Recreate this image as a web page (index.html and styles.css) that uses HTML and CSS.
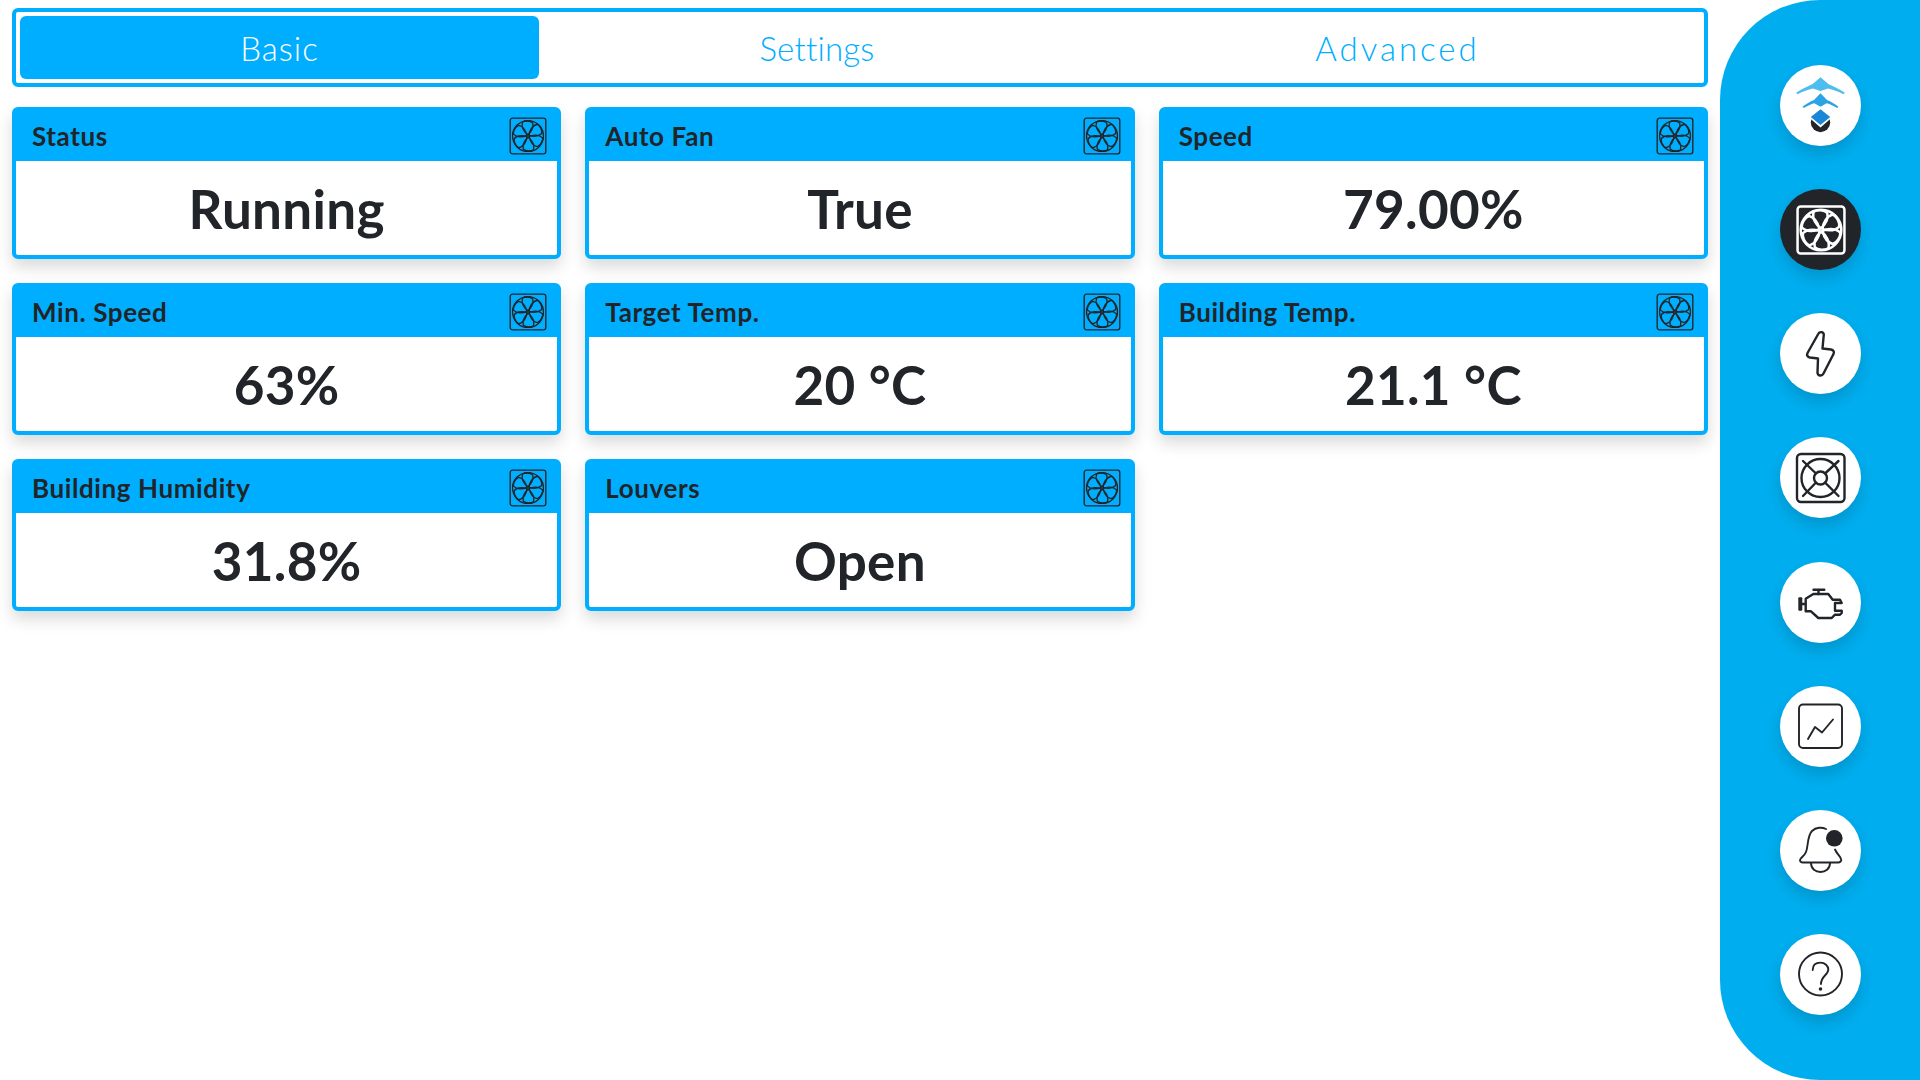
FILE: index.html
```html
<!DOCTYPE html>
<html lang="en">
<head>
<meta charset="utf-8">
<title>Fan Dashboard</title>
<link rel="stylesheet" href="styles.css">
</head>
<body>
<svg class="defs" aria-hidden="true">
  <defs>
    <symbol id="fan" viewBox="0 0 48 48">
      <rect x="1.5" y="1.5" width="45" height="45" rx="3"/>
      <circle cx="24" cy="24" r="19.500"/>
      <circle cx="24" cy="24" r="1.600"/>
      <g id="blade">
        <path d="M24 22.400C19.500 19.500 15 13 17 6.500C20.500 4.500 27 4.500 30 7.500C31.500 13 27.500 19 24 22.400"/>
      </g>
      <use href="#blade" transform="rotate(60 24 24)"/>
      <use href="#blade" transform="rotate(120 24 24)"/>
      <use href="#blade" transform="rotate(180 24 24)"/>
      <use href="#blade" transform="rotate(240 24 24)"/>
      <use href="#blade" transform="rotate(300 24 24)"/>
    </symbol>
  </defs>
</svg>
<div class="app">
  <main class="content">
    <nav class="tabs">
      <a class="tab tab-active">Basic</a>
      <a class="tab tab-settings">Settings</a>
      <a class="tab tab-advanced">Advanced</a>
    </nav>
    <section class="cards">
      <article class="card"><header class="card-head"><h2>Status</h2><svg class="fan-small"><use href="#fan"/></svg></header><div class="card-value">Running</div></article>
      <article class="card"><header class="card-head"><h2>Auto Fan</h2><svg class="fan-small"><use href="#fan"/></svg></header><div class="card-value">True</div></article>
      <article class="card"><header class="card-head"><h2>Speed</h2><svg class="fan-small"><use href="#fan"/></svg></header><div class="card-value">79.00%</div></article>
      <article class="card"><header class="card-head"><h2>Min. Speed</h2><svg class="fan-small"><use href="#fan"/></svg></header><div class="card-value">63%</div></article>
      <article class="card"><header class="card-head"><h2>Target Temp.</h2><svg class="fan-small"><use href="#fan"/></svg></header><div class="card-value">20 °C</div></article>
      <article class="card"><header class="card-head"><h2>Building Temp.</h2><svg class="fan-small"><use href="#fan"/></svg></header><div class="card-value">21.1 °C</div></article>
      <article class="card"><header class="card-head"><h2>Building Humidity</h2><svg class="fan-small"><use href="#fan"/></svg></header><div class="card-value">31.8%</div></article>
      <article class="card"><header class="card-head"><h2>Louvers</h2><svg class="fan-small"><use href="#fan"/></svg></header><div class="card-value">Open</div></article>
    </section>
  </main>
  <aside class="sidebar">
    <button class="round">
      <svg class="ico-fill" viewBox="0 0 81 81">
        <circle cx="40.500" cy="57.500" r="9.700" fill="#212529"/>
        <path d="M40.500 12.300L48.300 19C53 21.500 59 23.500 64.800 27.800L63.500 29.300C58 26.500 53 24.500 48 23.500L40.500 26L33 23.500C28 24.500 23 26.500 17.500 29.300L16.200 27.800C22 23.500 28 21.500 32.700 19Z" fill="#4dbdf0"/>
        <path d="M40.500 28.300L47 35C51 36.500 55 39 58.500 41.700L57.300 43C53.500 41 50 39.200 46.700 38.300L40.500 41.700L34.300 38.300C31 39.200 27.500 41 23.700 43L22.500 41.700C26 39 30 36.500 34 35Z" fill="#2ba4e6"/>
        <path d="M40.500 42.300L52.500 52L40.500 62.500L28.500 52Z" fill="#fff"/>
        <path d="M40.500 44.300L50.200 51.900L40.500 60L30.800 51.900Z" fill="#1a86d8"/>
      </svg>
    </button>
    <button class="round round-active">
      <svg class="fan-large"><use href="#fan"/></svg>
    </button>
    <button class="round">
      <svg class="ico" viewBox="0 0 81 81">
        <path d="M38.500 20.500C39.500 18.500 43.500 18.500 43.800 21.500L42.500 35.500L51 36.500C53.500 37 54.500 39 53.500 41L43.500 60.500C42 63.500 37.500 63 37.500 59.500L38 45.500L30 44.500C27.500 44 26.500 42 27.500 40Z"/>
      </svg>
    </button>
    <button class="round">
      <svg class="ico" viewBox="0 0 81 81">
        <rect x="17" y="17" width="47.500" height="48" rx="4"/>
        <circle cx="40.500" cy="41" r="19"/>
        <circle cx="40.500" cy="41" r="6.500"/>
        <path d="M23 24L36 36.500M58.500 24L45 36.500M23 59L36 45.500M58.500 59L45 45.500"/>
      </svg>
    </button>
    <button class="round">
      <svg class="ico" viewBox="0 0 81 81">
        <path d="M33.500 27.700H44.300M38.500 27.700V32"/>
        <rect class="dot" x="18.300" y="35.300" width="4" height="13.400" rx="1"/>
        <path d="M22.300 42H25.700M25.700 49.300V36.700L33.300 32H48.300L52.700 37.700H60L61.700 41H55V48.700H61.700V51L60 52.700H55L51.700 56H38.300L31 49.300Z"/>
      </svg>
    </button>
    <button class="round">
      <svg class="ico ico-thin" viewBox="0 0 81 81">
        <rect x="19" y="18.500" width="43" height="43.500" rx="4"/>
        <path d="M28 53L35 41L42 46.500L53 33.500"/>
      </svg>
    </button>
    <button class="round">
      <svg class="ico ico-thin" viewBox="0 0 81 81">
        <path d="M46 19C42 17 36 17 32 21C27 26 28.500 36 26 42C24.500 46 20 48 20 50C20 52 21.500 52.500 23 52.500H58C60 52.500 62 51 61 49C60 46 57 44 55 39.500"/>
        <path d="M31 53C31 65 50 65 50 53"/>
        <circle class="dot" cx="54.300" cy="28.300" r="8.300"/>
      </svg>
    </button>
    <button class="round">
      <svg class="ico ico-thin" viewBox="0 0 81 81">
        <circle cx="40.500" cy="40" r="21.500"/>
        <path d="M32.700 36C32.700 31 36 28.600 40.500 28.600C45 28.600 48.300 32 48.300 35.500C48.300 41 41 42 41 50"/>
        <circle class="dot" cx="40.500" cy="55" r="1.800"/>
      </svg>
    </button>
  </aside>
</div>
</body>
</html>
```
FILE: styles.css
```css
* { box-sizing: border-box; }
html, body { margin: 0; height: 100%; background: #fff; }
body { font-family: "Lato", "Open Sans", sans-serif; color: #212529; overflow: hidden; }
.defs { display: none; }
.app { display: flex; height: 1080px; }
.content { flex: 0 0 1720px; padding: 8px 12px 0; }
.tabs {
  display: grid;
  grid-template-columns: 519fr 556fr 605fr;
  height: 79px;
  padding: 4px;
  border: 4px solid #00aeff;
  border-radius: 6px;
}
.tab {
  display: flex;
  align-items: center;
  justify-content: center;
  font-size: 33px;
  font-weight: 300;
  letter-spacing: 1px;
  color: #00aeff;
  border-radius: 6px;
}
.tab-active { background: #00aeff; color: #fff; }
.tab-settings { letter-spacing: .2px; }
.tab-advanced { letter-spacing: 3px; }
.cards {
  display: grid;
  grid-template-columns: repeat(3, 1fr);
  grid-auto-rows: 152px;
  gap: 24px;
  margin-top: 20px;
}
.card {
  display: flex;
  flex-direction: column;
  background: #fff;
  border: 4px solid #00aeff;
  border-radius: 6px;
  box-shadow: 0 8px 16px rgba(0, 0, 0, .15);
}
.card-head {
  display: flex;
  align-items: center;
  justify-content: space-between;
  flex: 0 0 50px;
  padding: 0 10px 0 16px;
  background: #00aeff;
}
.card-head h2 { margin: 0; font-size: 26px; font-weight: 700; letter-spacing: .6px; }
.fan-small { display: block; width: 38px; height: 38px; fill: none; stroke: #212529; stroke-width: 1.7; }
.card-value {
  flex: 1;
  display: flex;
  align-items: center;
  justify-content: center;
  font-size: 53px;
  font-weight: 700;
  letter-spacing: .3px;
}
.sidebar {
  flex: 0 0 200px;
  display: flex;
  flex-direction: column;
  align-items: center;
  gap: 43.14px;
  padding: 65px 0 0 1px;
  background: #00aeef;
  border-radius: 100px 0 0 100px;
}
.round {
  flex: 0 0 81px;
  display: block;
  width: 81px;
  height: 81px;
  padding: 0;
  border: 0;
  border-radius: 50%;
  background: #fff;
  box-shadow: 0 8px 16px rgba(0, 0, 0, .15);
}
.round-active { background: #212529; display: flex; align-items: center; justify-content: center; }
.round svg { display: block; }
.ico, .ico-fill { width: 81px; height: 81px; }
.ico { fill: none; stroke: #212529; stroke-width: 2.4; stroke-linecap: round; stroke-linejoin: round; }
.ico-thin { stroke-width: 1.9; }
.ico .dot { fill: #212529; stroke: none; }
.fan-large { width: 50px; height: 50px; fill: none; stroke: #fff; stroke-width: 2.4; }
```
